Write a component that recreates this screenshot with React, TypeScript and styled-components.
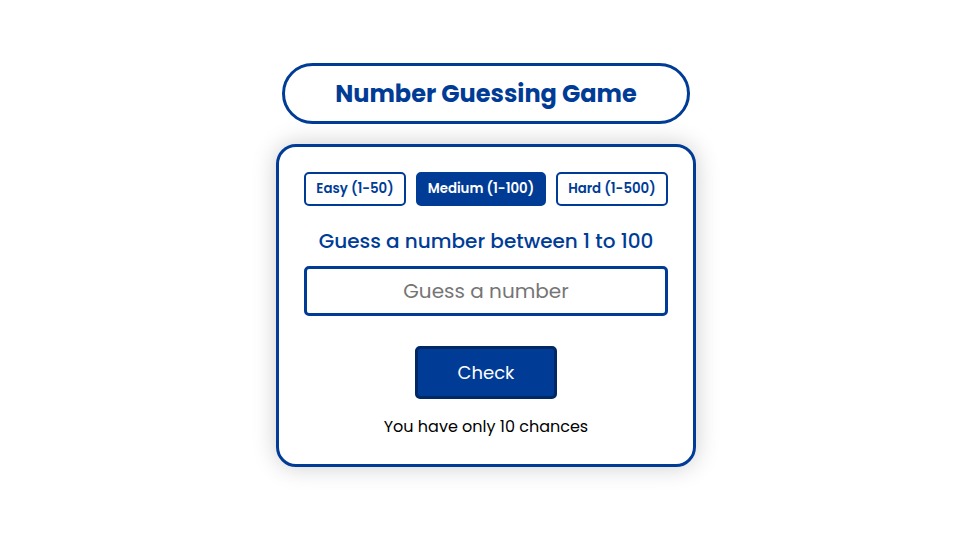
import React, { useState } from "react"
import styled, { createGlobalStyle } from "styled-components"

const GlobalStyle = createGlobalStyle`
  * {
    box-sizing: border-box;
    margin: 0;
    padding: 0;
  }

  body {
    background: #fff;
    font-family: Poppins, Inter, "Open Sans", sans-serif;
  }

  button,
  input {
    font-family: inherit;
  }
`

const Page = styled.main`
  min-height: 100vh;
  display: flex;
  flex-direction: column;
  align-items: center;
  justify-content: center;
  gap: 20px;
  padding: 10px 0 20px 12px;
`

const Title = styled.h1`
  padding: 9px 50px;
  border: 3px solid #003c96;
  border-radius: 50px;
  color: #003c96;
  font-size: 24px;
  font-weight: 700;
  line-height: 37px;
`

const Card = styled.form`
  width: 100%;
  max-width: 420px;
  display: flex;
  flex-direction: column;
  align-items: center;
  padding: 25px;
  border: 3px solid #003c96;
  border-radius: 20px;
  box-shadow: 0 0 25px rgba(0, 0, 0, 0.2);
`

const Levels = styled.div`
  display: flex;
  gap: 10px;
`

const LevelButton = styled.button<{ $active: boolean }>`
  padding: 5px 10px;
  border: 2px solid #003c96;
  border-radius: 5px;
  background: ${(props) => (props.$active ? "#003c96" : "#fff")};
  color: ${(props) => (props.$active ? "#fff" : "#003c96")};
  font-weight: 600;
  line-height: 20px;
  cursor: pointer;
`

const Label = styled.label`
  margin: 20px 0 10px;
  color: #003c96;
  font-size: 20px;
  font-weight: 500;
  line-height: 30px;
`

const GuessInput = styled.input`
  width: 100%;
  height: 50px;
  border: 3px solid #003c96;
  border-radius: 5px;
  font-size: 20px;
  text-align: center;

  &::placeholder {
    color: #757575;
  }
`

const CheckButton = styled.button`
  margin: 30px 0 16px;
  padding: 10px 40px;
  border: 3px solid #002864;
  border-radius: 5px;
  background: #003c96;
  color: #fff;
  font-size: 18px;
  font-weight: 400;
  line-height: 27px;
  cursor: pointer;
`

const Chances = styled.p`
  color: #000;
  font-size: 16px;
  line-height: 24px;
`

const levels = [
  { name: "Easy", max: 50 },
  { name: "Medium", max: 100 },
  { name: "Hard", max: 500 },
]

const pickNumber = (max: number) => Math.floor(Math.random() * max) + 1

const App: React.FC = () => {
  const [max, setMax] = useState(100)
  const [target, setTarget] = useState(() => pickNumber(100))
  const [guess, setGuess] = useState("")
  const [chances, setChances] = useState(10)
  const [message, setMessage] = useState("")

  const selectLevel = (levelMax: number) => {
    setMax(levelMax)
    setTarget(pickNumber(levelMax))
    setGuess("")
    setChances(10)
    setMessage("")
  }

  const checkGuess = (e: React.FormEvent<HTMLFormElement>) => {
    e.preventDefault()
    const value = Number(guess)
    if (!value || chances === 0) return
    setChances(chances - 1)
    if (value === target) {
      setMessage("You guessed it!")
    } else {
      setMessage(value > target ? "Too high" : "Too low")
    }
    setGuess("")
  }

  return (
    <Page>
      <GlobalStyle />
      <Title>Number Guessing Game</Title>
      <Card onSubmit={checkGuess}>
        <Levels>
          {levels.map((level) => (
            <LevelButton
              key={level.name}
              type="button"
              $active={level.max === max}
              onClick={() => selectLevel(level.max)}>
              {`${level.name} (1-${level.max})`}
            </LevelButton>
          ))}
        </Levels>
        <Label htmlFor="guess">{`Guess a number between 1 to ${max}`}</Label>
        <GuessInput
          id="guess"
          inputMode="numeric"
          placeholder="Guess a number"
          value={guess}
          onChange={(e) => setGuess(e.target.value)}
        />
        <CheckButton type="submit">Check</CheckButton>
        <Chances>{`You have only ${chances} chances`}</Chances>
        {message ? <Chances>{message}</Chances> : null}
      </Card>
    </Page>
  )
}

export default App
